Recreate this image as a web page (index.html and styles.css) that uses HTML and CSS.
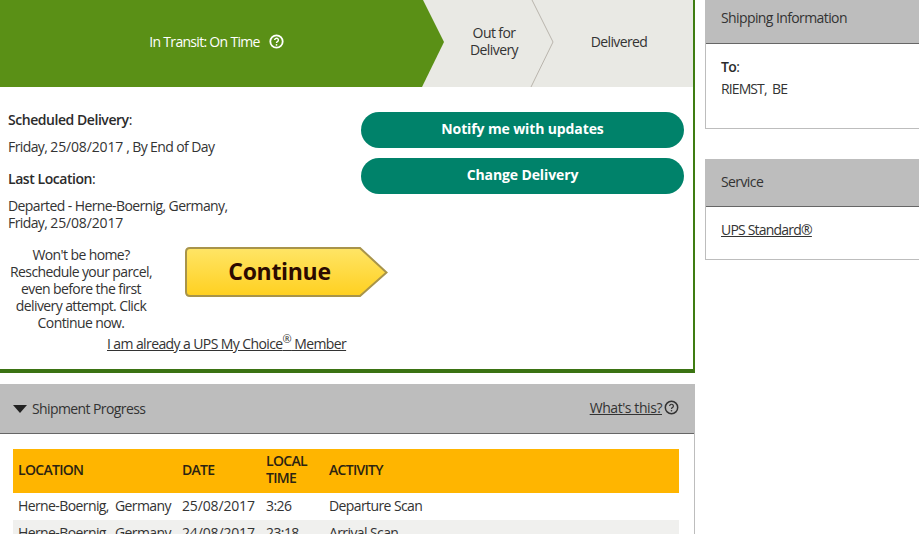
FILE: index.html
```html
<!DOCTYPE html>
<html lang="en">
<head>
<meta charset="utf-8">
<title>Tracking</title>
<link rel="stylesheet" href="styles.css">
</head>
<body>
<div class="page">
  <main class="main">
    <section class="status">
      <div class="tracker">
        <svg class="tracker-bg" width="693" height="87" viewBox="0 0 693 87">
          <rect width="693" height="87" fill="#e9e9e4"/>
          <polygon points="0,0 423,0 444,42 422,87 0,87" fill="#5a9016"/>
          <polyline points="532,0 553,42 531,87" fill="none" stroke="#b9b4ac" stroke-width="1"/>
        </svg>
        <div class="step step-now">
          <span>In Transit: On Time</span>
          <svg class="help" width="15" height="15" viewBox="0 0 15 15"><circle cx="7.5" cy="7.5" r="6.2" fill="none" stroke="#fff" stroke-width="1.8"/><path d="M5.6 6.1a1.9 1.8 0 1 1 2.9 1.500c-.7.4-1 .7-1 1.300" fill="none" stroke="#fff" stroke-width="1.4"/><circle cx="7.5" cy="10.8" r=".9" fill="#fff"/></svg>
        </div>
        <div class="step step-out">Out for<br>Delivery</div>
        <div class="step step-done">Delivered</div>
      </div>
      <div class="details">
        <div class="facts">
          <h3 class="label">Scheduled Delivery<span class="colon">:</span></h3>
          <p class="value">Friday, <span class="num">25/08/2017</span> , By End of Day</p>
          <h3 class="label label-next">Last Location<span class="colon">:</span></h3>
          <p class="value">Departed - Herne-Boernig, Germany,<br>Friday, <span class="num">25/08/2017</span></p>
        </div>
        <div class="actions">
          <a class="pill">Notify me with updates</a>
          <a class="pill">Change Delivery</a>
        </div>
      </div>
      <div class="promo">
        <p class="promo-text">Won't be home? Reschedule your parcel, even before the first delivery attempt. Click Continue now.</p>
        <a class="continue">
          <svg class="continue-bg" width="204" height="51" viewBox="0 0 204 51">
            <defs><linearGradient id="gold" x1="0" y1="0" x2="0" y2="1"><stop offset="0" stop-color="#ffe566"/><stop offset="1" stop-color="#ffd020"/></linearGradient></defs>
            <path d="M5 1H175L201.500 25.500 175 49H5Q1 49 1 45V5Q1 1 5 1Z" fill="url(#gold)" stroke="#a8944a" stroke-width="2"/>
          </svg>
          <span class="continue-text">Continue</span>
        </a>
      </div>
      <p class="member"><a class="link">I am already a UPS My Choice<sup class="reg">®</sup> Member</a></p>
    </section>
    <section class="progress">
      <header class="bar progress-bar">
        <div class="progress-title"><span class="caret"></span>Shipment Progress</div>
        <div class="whats"><a class="link">What's this?</a>
          <svg width="15" height="15" viewBox="0 0 15 15"><circle cx="7.500" cy="7.500" r="6.200" fill="none" stroke="#333" stroke-width="1.500"/><path d="M5.600 6.100a1.900 1.800 0 1 1 2.900 1.500c-.7.4-1 .7-1 1.300" fill="none" stroke="#333" stroke-width="1.200"/><circle cx="7.500" cy="10.800" r=".8" fill="#333"/></svg>
        </div>
      </header>
      <div class="table-wrap">
        <table class="events">
          <thead>
            <tr><th class="c1">LOCATION</th><th class="c2">DATE</th><th class="c3">LOCAL TIME</th><th>ACTIVITY</th></tr>
          </thead>
          <tbody>
            <tr><td>Herne-Boernig,&nbsp; Germany</td><td class="num">25/08/2017</td><td>3:26</td><td>Departure Scan</td></tr>
            <tr class="alt"><td>Herne-Boernig,&nbsp; Germany</td><td class="num">24/08/2017</td><td>23:18</td><td>Arrival Scan</td></tr>
          </tbody>
        </table>
      </div>
    </section>
  </main>
  <aside class="side">
    <section class="panel panel-ship">
      <header class="bar panel-head head-ship">Shipping Information</header>
      <div class="panel-body">
        <p class="to"><strong>To</strong>:</p>
        <p class="addr">RIEMST,&nbsp; BE</p>
      </div>
    </section>
    <section class="panel panel-service">
      <header class="bar panel-head head-service">Service</header>
      <div class="panel-body"><a class="link service-link">UPS Standard®</a></div>
    </section>
  </aside>
</div>
</body>
</html>
```
FILE: styles.css
```css
html, body { margin: 0; padding: 0; }
body {
  width: 919px;
  height: 534px;
  overflow: hidden;
  background: #fff;
  color: #333;
  font-family: "Open Sans", "Noto Sans", sans-serif;
  font-size: 14px;
  letter-spacing: -0.6px;
}
p, h3 { margin: 0; }
.num { letter-spacing: -0.15px; }
.page { display: flex; width: 919px; height: 534px; overflow: hidden; }
.main { width: 695px; flex: none; }
.side { flex: 1; margin-left: 10px; min-width: 0; }

.status { height: 369px; border-right: 2px solid #3f7d12; border-bottom: 4px solid #3b7313; }
.tracker { position: relative; display: flex; height: 87px; }
.tracker-bg { position: absolute; left: 0; top: 0; }
.step { position: relative; display: flex; align-items: center; justify-content: center; text-align: center; line-height: 17px; padding-bottom: 4px; box-sizing: border-box; }
.step-now { width: 433px; flex: none; color: #fff; gap: 9px; letter-spacing: -0.7px; }
.step-out { width: 122px; flex: none; padding-bottom: 6px; }
.step-done { width: 128px; flex: none; }

.details { display: flex; height: 145px; padding-top: 24px; box-sizing: border-box; }
.facts { width: 361px; flex: none; padding-left: 8px; box-sizing: border-box; }
.label { font-size: 14px; font-weight: 600; line-height: 17px; color: #2b2b2b; letter-spacing: -0.45px; }
.colon { font-weight: 400; }
.value { margin-top: 10px; line-height: 17px; }
.label-next { margin-top: 15px; }
.actions { width: 323px; display: flex; flex-direction: column; gap: 10px; margin-top: 1px; }
.pill { display: flex; align-items: center; justify-content: center; height: 36px; padding-bottom: 4px; box-sizing: border-box; border-radius: 18px; background: #00826a; color: #fff; font-weight: 700; letter-spacing: -0.12px; }

.promo { display: flex; align-items: flex-start; margin-top: 14px; }
.promo-text { width: 162px; flex: none; text-align: center; line-height: 17px; }
.continue { position: relative; display: flex; align-items: center; justify-content: center; width: 204px; height: 51px; margin-left: 23px; margin-top: 1px; }
.continue-bg { position: absolute; left: 0; top: 0; }
.continue-text { position: relative; font-size: 23px; font-weight: 700; color: #2c0a00; letter-spacing: -0.3px; margin-right: 15px; margin-bottom: 4px; }

.member { margin-top: 4px; margin-left: 107px; line-height: 17px; }
.link { color: #333; text-decoration: underline; }
.service-link { letter-spacing: -0.8px; }
.reg { font-size: 11px; line-height: 0; }

.progress { margin-top: 11px; height: 150px; border-right: 1px solid #bdbdbd; width: 694px; }
.bar { background: #bdbdbd; border-bottom: 1px solid #666; box-sizing: border-box; }
.progress-bar { display: flex; align-items: center; justify-content: space-between; height: 50px; padding: 0 15px 0 13px; }
.progress-title { display: flex; align-items: center; gap: 5px; }
.caret { width: 0; height: 0; border-left: 7.500px solid transparent; border-right: 7.500px solid transparent; border-top: 8px solid #222; }
.whats { display: flex; align-items: center; gap: 2px; margin-top: -2px; letter-spacing: -0.43px; }

.table-wrap { padding: 15px 15px 0 13px; }
.events { width: 666px; border-collapse: collapse; table-layout: fixed; }
.events th { background: #ffb500; height: 40px; padding: 0 5px 4px; text-align: left; font-size: 14px; font-weight: 600; line-height: 17px; color: #2b2312; vertical-align: middle; letter-spacing: -0.7px; }
.events td { height: 25px; padding: 0 5px 2px; line-height: 17px; white-space: nowrap; }
.c1 { width: 154px; }
.c2 { width: 74px; }
.c3 { width: 53px; }
.alt td { background: #f0f0ee; }

.panel { border-left: 1px solid #bdbdbd; border-bottom: 1px solid #bdbdbd; box-sizing: border-box; }
.panel-ship { height: 129px; }
.panel-service { height: 101px; margin-top: 30px; }
.panel-head { display: flex; align-items: center; padding-left: 15px; }
.head-ship { height: 44px; padding-bottom: 8px; }
.head-service { height: 48px; padding-bottom: 2px; }
.panel-body { padding: 14px 0 0 15px; line-height: 17px; }
.to strong { font-weight: 600; color: #2b2b2b; }
.addr { margin-top: 5px; letter-spacing: -0.9px; }
```
